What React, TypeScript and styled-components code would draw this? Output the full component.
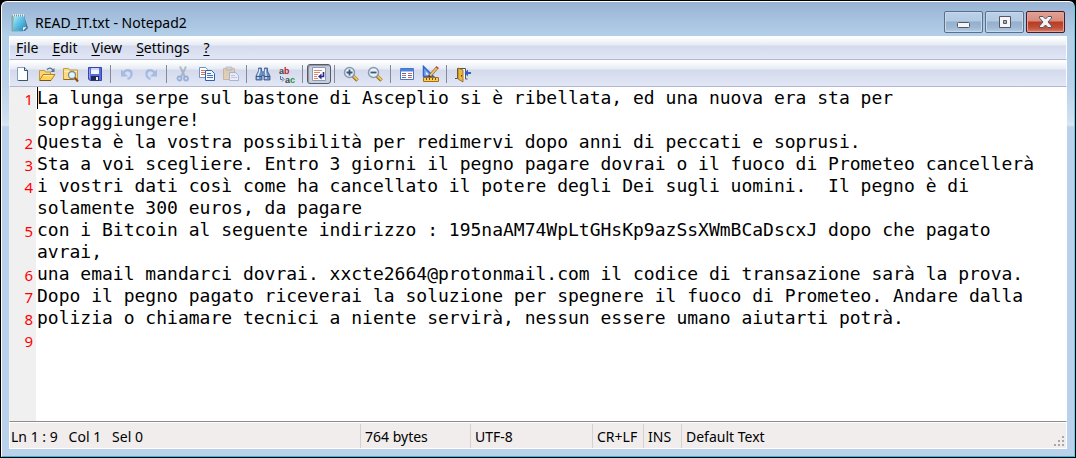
import React, { useLayoutEffect, useRef, useState } from 'react';
import styled, { createGlobalStyle, css } from 'styled-components';

const uiFont = '"Noto Sans", "Open Sans", sans-serif';
const codeFont = '"DejaVu Sans Mono", "Liberation Mono", monospace';

const GlobalStyle = createGlobalStyle`
  * { box-sizing: border-box; }
  body { margin: 0; background: #000; font-family: ${uiFont}; font-size: 14px; color: #000; }
  button, textarea { font: inherit; color: inherit; }
`;

const Frame = styled.div`
  min-height: 100vh;
  padding: 1px;
  background: #000;
  display: flex;
`;

const Window = styled.main`
  flex: 1;
  min-width: 0;
  display: flex;
  flex-direction: column;
  padding: 0 7px 7px 7px;
  border: 1px solid #fff;
  border-right-color: #4fd3ee;
  border-bottom-color: #1fc3dc;
  border-radius: 6px 6px 0 0;
  background: linear-gradient(#98b4d2 0, #a3bfdd 14px, #b4cfe8 34px, #b9d1ea 80px, #cfe0f1 118px, #d9e7f5 123px, #b9d1ea 125px);
`;

const TitleBar = styled.header`
  height: 34px;
  display: flex;
  align-items: center;
  gap: 6px;
  padding: 8px 2px 0 2px;
`;

const Title = styled.h1`
  flex: 1;
  margin: 0;
  font-size: 14px;
  line-height: 20px;
  font-weight: 400;
`;

const Captions = styled.div`
  display: flex;
  gap: 2px;
  align-self: flex-start;
  margin-top: 1px;
`;

const CaptionButton = styled.button<{ $close?: boolean }>`
  width: 39px;
  height: 22px;
  padding: 0;
  display: grid;
  place-items: center;
  border: 1px solid ${p => (p.$close ? '#4d1a22' : '#5b6f8a')};
  border-radius: 2px;
  box-shadow: inset 0 0 0 1px ${p => (p.$close ? '#e5a296' : '#c6daee')};
  background: ${p =>
    p.$close
      ? 'linear-gradient(#e0a195 0, #d88c7d 9px, #b83b22 10px, #c35138 16px, #d98470)'
      : 'linear-gradient(#bcd1e7 0, #b2cae2 9px, #95aecb 10px, #a0b9d5 16px, #b5cee7)'};
`;

const barFill = css`
  border: 1px solid #fdfdff;
  border-bottom-color: #b3b8cf;
  background: linear-gradient(#fff 0, #e6ebf4 8px, #d4daec 9px, #e2e7f6 100%);
`;

const MenuBar = styled.nav`
  ${barFill}
  height: 24px;
  display: flex;
  align-items: center;
  gap: 14px;
  padding: 0 6px;
`;

const MenuItem = styled.button`
  padding: 0;
  border: 0;
  background: none;
  line-height: 20px;
  & u { text-underline-offset: 2px; }
`;

const ToolBar = styled.div`
  ${barFill}
  height: 27px;
  display: flex;
  align-items: center;
  padding-left: 1px;
`;

const Tool = styled.button<{ $pressed?: boolean }>`
  width: 24px;
  height: 20px;
  padding: 0;
  display: grid;
  place-items: center;
  border: 1px solid ${p => (p.$pressed ? '#555b66' : 'transparent')};
  border-radius: 3px;
  background: ${p => (p.$pressed ? '#c9cedd' : 'none')};
  box-shadow: ${p => (p.$pressed ? 'inset 1px 1px 1px #8c92a2' : 'none')};
  &:disabled { opacity: 0.4; }
`;

const Separator = styled.span`
  width: 1px;
  height: 18px;
  margin: 0 4px 0 3px;
  background: #858a99;
`;

const Editor = styled.section`
  position: relative;
  flex: 1;
  min-height: 330px;
  display: flex;
  background: #fff;
`;

const Gutter = styled.ol`
  width: 27px;
  margin: 0;
  padding: 0 3px 0 0;
  list-style: none;
  background: #f0f0f0;
  color: #f00;
  font-size: 15px;
  text-align: right;
`;

const LineNumber = styled.li<{ $rows: number }>`
  height: ${p => p.$rows * 22}px;
  line-height: 24px;
`;

const TextBox = styled.textarea`
  flex: 1;
  min-width: 0;
  margin: 0;
  padding: 0 8px 0 1px;
  border: 0;
  outline: 0;
  resize: none;
  overflow: hidden;
  background: transparent;
  font-family: ${codeFont};
  font-size: 18px;
  line-height: 22px;
`;

const Caret = styled.span`
  position: absolute;
  left: 28px;
  top: 0;
  width: 1px;
  height: 22px;
  background: #000;
`;

const StatusBar = styled.footer`
  height: 28px;
  display: flex;
  align-items: stretch;
  border: 1px solid #fff;
  border-top-color: #8b8b8b;
  box-shadow: inset 0 1px #fff;
  background: #f0edec;
`;

const Status = styled.span<{ $width?: number }>`
  ${p => (p.$width ? `width: ${p.$width}px;` : 'flex: 1;')}
  margin-top: 2px;
  padding: 0 4px;
  border-left: 1px solid #d4d2d1;
  line-height: 26px;
  white-space: pre;
  &:first-child { border-left: 0; padding-left: 1px; }
`;

const Grip = styled.svg`
  align-self: flex-end;
`;

const art = { width: 18, height: 18, viewBox: '0 0 18 18', 'aria-hidden': true };

const AppIcon = () => (
  <svg width="18" height="20" viewBox="0 0 18 20" aria-hidden="true">
    <defs>
      <linearGradient id="pad" x1="0" y1="0" x2="1" y2="1">
        <stop offset="0" stopColor="#b4ecf8" />
        <stop offset="0.5" stopColor="#56bce2" />
        <stop offset="1" stopColor="#2a80bb" />
      </linearGradient>
    </defs>
    <path d="M13 3l4 12-3 3H6z" fill="#4d7187" />
    <path d="M1 3l12-1 2 13-3 3H1z" fill="#8fb9a8" stroke="#5c93ad" strokeWidth="0.6" />
    <path d="M3 3h10l2 12-3 3-10-1z" fill="url(#pad)" />
    <path d="M12 17.500l3.500-3.500-3.500.5z" fill="#f4fbff" />
    <path d="M2.500 1v2.500M4.500 1v2.500M6.500 1v2.500M8.500 1v2.500M10.500 1v2.500M12.500 1v2.500" stroke="#e3edf2" />
    <path d="M3.500 2v1.500M5.500 2v1.500M7.500 2v1.500M9.500 2v1.500M11.500 2v1.500" stroke="#6a8798" strokeWidth="0.6" />
  </svg>
);

const NewIcon = () => (
  <svg {...art}>
    <path d="M3.500 2.500h7l3 3v10h-10z" fill="#fdfeff" stroke="#8ba0b8" />
    <path d="M10.500 2.500l3 3v10h-9" fill="none" stroke="#3c5269" />
    <path d="M10.500 2.500v3h3" fill="#dce5ef" stroke="#3c5269" />
  </svg>
);

const OpenIcon = () => (
  <svg {...art}>
    <path d="M1.500 15V5.500h5l1 1.500h5v3" fill="#f6d679" stroke="#c69a3a" />
    <path d="M1.500 15.500L5 9.500h12l-4 6z" fill="#ffd45c" stroke="#b98218" />
    <path d="M5.500 10.500h9" stroke="#fff1ad" />
    <path d="M2 15.500h11" stroke="#7d520c" />
    <path d="M9 4.500c2-2 4.500-2 6 1" fill="none" stroke="#57738e" strokeWidth="1.300" />
    <path d="M16.500 3v4h-4z" fill="#57738e" />
  </svg>
);

const BrowseIcon = () => (
  <svg {...art}>
    <path d="M1.500 14.500V3.500h5l1 1.500h8v9.500z" fill="#fbdc80" stroke="#c69a3a" />
    <path d="M2 6.500h13" stroke="#fff2bd" />
    <path d="M1.500 14.500h10" stroke="#93671a" />
    <path d="M12.500 12.500l3.500 4" stroke="#8a4b14" strokeWidth="2" />
    <circle cx="10" cy="10" r="3.500" fill="#e6f5fc" stroke="#7c8894" strokeWidth="1.300" />
  </svg>
);

const SaveIcon = () => (
  <svg {...art}>
    <path d="M2.500 2.500h13v13H4l-1.500-1.500z" fill="#5a6de0" stroke="#3745a6" />
    <path d="M5 3h8v6H5z" fill="#f2f6ff" />
    <path d="M5 3h8v2H5z" fill="#c9d8f7" />
    <path d="M5 11h8v4.500H5z" fill="#22284f" />
    <path d="M10 12h2v3h-2z" fill="#f3f5fb" />
    <path d="M3.500 3.500v10" stroke="#8e9ef0" />
  </svg>
);

const UndoIcon = ({ flip }: { flip?: boolean }) => (
  <svg {...art}>
    <g transform={flip ? 'matrix(-1 0 0 1 18 0)' : undefined}>
      <path d="M5 8.500c3-5 9-4 8.500 1-.3 2.500-2 4-4 4.500" fill="none" stroke="#5f8ad4" strokeWidth="2.300" />
      <path d="M3 4.500v7h7z" fill="#5f8ad4" />
    </g>
  </svg>
);

const CutIcon = () => (
  <svg {...art}>
    <path d="M6 1.500l5 10.500M12 1.500L7 12" stroke="#66788e" strokeWidth="2" />
    <circle cx="5.500" cy="13.500" r="2" fill="none" stroke="#3867b4" strokeWidth="1.800" />
    <circle cx="12" cy="13.500" r="2" fill="none" stroke="#3867b4" strokeWidth="1.800" />
  </svg>
);

const CopyIcon = () => (
  <svg {...art}>
    <path d="M1.500 2.500h6l2 2v8h-8z" fill="#fff" stroke="#6d93cc" />
    <path d="M3 5.500h4M3 7.500h4M3 9.500h4" stroke="#e0704f" />
    <path d="M7.500 5.500h6l3 3v7h-9z" fill="#f4f9ff" stroke="#315fae" />
    <path d="M9 8.500h4M9 10.500h6M9 12.500h6" stroke="#3c73cf" />
  </svg>
);

const PasteIcon = () => (
  <svg {...art}>
    <path d="M1.500 3.500h11v11h-11z" fill="#efb658" stroke="#b0742a" />
    <path d="M4 2h6v3H4z" fill="#a5adb8" stroke="#58616d" strokeWidth="0.700" />
    <path d="M7.500 7.500h6l3 3v5h-9z" fill="#fff" stroke="#57759d" />
    <path d="M9 10.500h4M9 12.500h6" stroke="#86a3ce" />
  </svg>
);

const FindIcon = () => (
  <svg {...art}>
    <path d="M4.500 3h3v3l1 1h1l1-1V3h3v3l2.500 5v4h-6v-4.500H8V15H2v-4l2.500-5z" fill="#6c8dbd" stroke="#34568c" strokeWidth="0.800" />
    <path d="M5.500 4v3L4 10v4M11.500 4v3l.5 3v4" fill="none" stroke="#dcebfb" strokeWidth="1.400" />
    <path d="M2 11.500h6M10 11.500h6" stroke="#34568c" />
  </svg>
);

const Glyph = styled.text`
  font: 700 9px "Liberation Sans", sans-serif;
`;

const ReplaceSvg = styled.svg`
  overflow: visible;
`;

const ReplaceIcon = () => (
  <ReplaceSvg width="18" height="20" viewBox="0 0 18 20" aria-hidden="true">
    <Glyph x="1" y="9" fill="#454545">
      a<tspan fill="#c22131">b</tspan>
    </Glyph>
    <Glyph x="7" y="18" fill="#454545">
      a<tspan fill="#1d9838">c</tspan>
    </Glyph>
    <path d="M2.500 11v3.500h2M4 12l2 2.500-2 2" fill="none" stroke="#5378a8" />
  </ReplaceSvg>
);

const WrapIcon = () => (
  <svg {...art}>
    <path d="M2.500 2.500h13v13h-13z" fill="#fbfcff" stroke="#8a9ab7" />
    <path d="M4 5.500h8M4 7.500h6M4 9.500h4M4 11.500h3M4 13.500h4" stroke="#dc8a6d" />
    <path d="M13.500 7v4.500H10" fill="none" stroke="#242c8c" strokeWidth="1.600" />
    <path d="M11.500 8.500v6l-3.500-3z" fill="#242c8c" />
  </svg>
);

const ZoomIcon = ({ plus }: { plus?: boolean }) => (
  <svg {...art}>
    <path d="M11 11l4.500 4.500" stroke="#906b24" strokeWidth="3.500" />
    <path d="M11.500 11l4 4" stroke="#efc45a" strokeWidth="2" />
    <circle cx="7.500" cy="7.500" r="5" fill="#e4f2fb" stroke="#8a99ab" strokeWidth="1.500" />
    <path d={plus ? 'M4.500 7.500h6M7.500 4.500v6' : 'M4.500 7.500h6'} stroke="#3d5779" strokeWidth="1.800" />
  </svg>
);

const SchemeIcon = () => (
  <svg {...art}>
    <path d="M2.500 3.500h13v11h-13z" fill="#fff" stroke="#4977c7" />
    <path d="M2 4h14v2.500H2z" fill="#4b82dc" />
    <path d="M4 8.500h4M4 12.500h4M10 10.500h4" stroke="#4b6fb5" />
    <path d="M10 8.500h4M4 10.500h4M10 12.500h4" stroke="#e16c57" />
  </svg>
);

const CustomizeIcon = () => (
  <svg {...art}>
    <path d="M1.500 1.500v10h10z" fill="#7da9f2" stroke="#2f66cc" strokeWidth="1.500" />
    <path d="M4 7v2.500h2.500z" fill="#fff" />
    <path d="M7 10l7-8 2 1.500-7 8-3 1z" fill="#e9bd69" stroke="#805c32" strokeWidth="0.700" />
    <path d="M6 12.500l3-1-2-1.500z" fill="#333" />
    <path d="M14 1.500l2.500 2" stroke="#bc4d3c" strokeWidth="1.500" />
    <path d="M1.500 12.500h15v4h-15z" fill="#f9cd55" stroke="#a56e14" />
    <path d="M4.500 13v2M7.500 13v2M10.500 13v2M13.500 13v2" stroke="#755012" />
  </svg>
);

const ExitIcon = () => (
  <svg {...art}>
    <path d="M1 13.500h2.500V3.500h8V14h2" fill="#f7f7fa" stroke="#555" />
    <path d="M4 3l5 2v12l-5-3z" fill="#edb73b" stroke="#8c6114" strokeWidth="0.800" />
    <path d="M7.500 10v1.500" stroke="#5f3c08" />
    <path d="M17 8h-4" stroke="#2f65c2" strokeWidth="2" />
    <path d="M14 4.500v7L10.500 8z" fill="#2f65c2" />
  </svg>
);

type ToolSpec = { label: string; icon: React.ReactNode; disabled?: boolean; pressed?: boolean };

const toolGroups: ToolSpec[][] = [
  [
    { label: 'New', icon: <NewIcon /> },
    { label: 'Open', icon: <OpenIcon /> },
    { label: 'Browse', icon: <BrowseIcon /> },
    { label: 'Save', icon: <SaveIcon /> },
  ],
  [
    { label: 'Undo', icon: <UndoIcon />, disabled: true },
    { label: 'Redo', icon: <UndoIcon flip />, disabled: true },
  ],
  [
    { label: 'Cut', icon: <CutIcon />, disabled: true },
    { label: 'Copy', icon: <CopyIcon /> },
    { label: 'Paste', icon: <PasteIcon />, disabled: true },
  ],
  [
    { label: 'Find', icon: <FindIcon /> },
    { label: 'Replace', icon: <ReplaceIcon /> },
  ],
  [{ label: 'Word wrap', icon: <WrapIcon />, pressed: true }],
  [
    { label: 'Zoom in', icon: <ZoomIcon plus /> },
    { label: 'Zoom out', icon: <ZoomIcon /> },
  ],
  [
    { label: 'Select scheme', icon: <SchemeIcon /> },
    { label: 'Customize schemes', icon: <CustomizeIcon /> },
  ],
  [{ label: 'Exit', icon: <ExitIcon /> }],
];

const menus = ['File', 'Edit', 'View', 'Settings', '?'];

const initialText = [
  'La lunga serpe sul bastone di Asceplio si è ribellata, ed una nuova era sta per sopraggiungere!',
  'Questa è la vostra possibilità per redimervi dopo anni di peccati e soprusi.',
  'Sta a voi scegliere. Entro 3 giorni il pegno pagare dovrai o il fuoco di Prometeo cancellerà',
  'i vostri dati così come ha cancellato il potere degli Dei sugli uomini.  Il pegno è di solamente 300 euros, da pagare',
  'con i Bitcoin al seguente indirizzo : 195naAM74WpLtGHsKp9azSsXWmBCaDscxJ dopo che pagato avrai,',
  'una email mandarci dovrai. xxcte2664@protonmail.com il codice di transazione sarà la prova.',
  'Dopo il pegno pagato riceverai la soluzione per spegnere il fuoco di Prometeo. Andare dalla',
  'polizia o chiamare tecnici a niente servirà, nessun essere umano aiutarti potrà.',
  '',
].join('\n');

// Number of visual rows a line takes when it wraps at the given column count.
function countRows(line: string, columns: number) {
  let rows = 1;
  let used = 0;
  for (const word of line.split(' ')) {
    if (used > 0 && used + word.length > columns) {
      rows += 1;
      used = 0;
    }
    used += word.length + 1;
  }
  return rows;
}

export default function App() {
  const [text, setText] = useState(initialText);
  const [columns, setColumns] = useState(93);
  const box = useRef<HTMLTextAreaElement>(null);

  useLayoutEffect(() => {
    const measure = () => {
      const context = document.createElement('canvas').getContext('2d');
      if (!box.current || !context) return;
      context.font = `18px ${codeFont}`;
      const advance = context.measureText('0'.repeat(50)).width / 50;
      setColumns(Math.floor((box.current.clientWidth - 9) / advance));
    };
    measure();
    window.addEventListener('resize', measure);
    return () => window.removeEventListener('resize', measure);
  }, []);

  return (
    <>
      <GlobalStyle />
      <Frame>
        <Window>
          <TitleBar>
            <AppIcon />
            <Title>READ_IT.txt - Notepad2</Title>
            <Captions>
              <CaptionButton aria-label="Minimize">
                <svg width="15" height="14" viewBox="0 0 15 14">
                  <rect x="1.500" y="7.500" width="12" height="5" rx="1" fill="#f5f5f5" stroke="#535666" />
                </svg>
              </CaptionButton>
              <CaptionButton aria-label="Maximize">
                <svg width="14" height="14" viewBox="0 0 14 14">
                  <path d="M1.500 1.500h11v11h-11zM5.500 5.500v3h3v-3z" fill="#f5f5f5" fillRule="evenodd" stroke="#535666" />
                </svg>
              </CaptionButton>
              <CaptionButton $close aria-label="Close">
                <svg width="15" height="14" viewBox="0 0 15 14">
                  <path d="M1.500 1.500h3.500l2.500 2.500L10 1.500h3.500v1.500L10 7l3.500 4v1.500H10L7.500 10 5 12.500H1.500V11L5 7 1.500 3z" fill="#f5f5f5" stroke="#535666" />
                </svg>
              </CaptionButton>
            </Captions>
          </TitleBar>
          <MenuBar>
            {menus.map(name => (
              <MenuItem key={name}>
                <u>{name[0]}</u>
                {name.slice(1)}
              </MenuItem>
            ))}
          </MenuBar>
          <ToolBar role="toolbar">
            {toolGroups.map((group, index) => (
              <React.Fragment key={index}>
                {index > 0 && <Separator />}
                {group.map(tool => (
                  <Tool
                    key={tool.label}
                    aria-label={tool.label}
                    aria-pressed={tool.pressed}
                    disabled={tool.disabled}
                    $pressed={tool.pressed}
                  >
                    {tool.icon}
                  </Tool>
                ))}
              </React.Fragment>
            ))}
          </ToolBar>
          <Editor>
            <Gutter>
              {text.split('\n').map((line, index) => (
                <LineNumber key={index} $rows={countRows(line, columns)}>
                  {index + 1}
                </LineNumber>
              ))}
            </Gutter>
            <TextBox
              ref={box}
              aria-label="Document text"
              spellCheck={false}
              value={text}
              onChange={event => setText(event.target.value)}
            />
            <Caret />
          </Editor>
          <StatusBar>
            <Status $width={350}>Ln 1 : 9   Col 1   Sel 0</Status>
            <Status $width={110}>764 bytes</Status>
            <Status $width={122}>UTF-8</Status>
            <Status $width={51}>CR+LF</Status>
            <Status $width={38}>INS</Status>
            <Status>Default Text</Status>
            <Grip width="13" height="13" viewBox="0 0 13 13" aria-hidden="true">
              <path d="M9 1h2v2H9zM5 5h2v2H5zM9 5h2v2H9zM1 9h2v2H1zM5 9h2v2H5zM9 9h2v2H9z" fill="#aaa8a7" />
            </Grip>
          </StatusBar>
        </Window>
      </Frame>
    </>
  );
}
